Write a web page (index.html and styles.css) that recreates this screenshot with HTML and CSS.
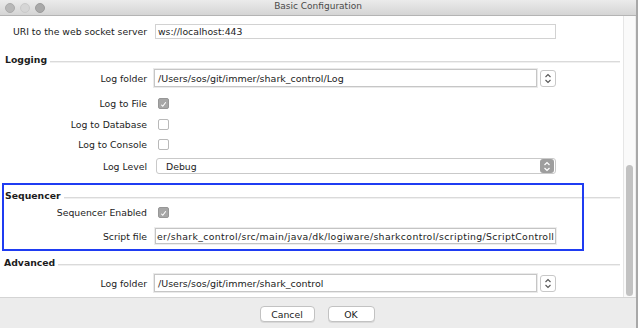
FILE: index.html
```html
<!DOCTYPE html>
<html>
<head>
<meta charset="utf-8">
<link rel="stylesheet" href="styles.css">
</head>
<body>
<div class="window">
  <div class="titlebar">
    <div class="lights">
      <span class="light l1"></span><span class="light l2"></span><span class="light l3"></span>
    </div>
    <div class="title">Basic Configuration</div>
  </div>
  <div class="main">
    <div class="content">
      <div class="row uri">
        <div class="label">URI to the web socket server</div>
        <div class="field plain">ws://localhost:443</div>
      </div>

      <div class="section-head logging"><span class="head-text">Logging</span><span class="head-line"></span></div>
      <div class="row folder first">
        <div class="label">Log folder</div>
        <div class="field combo">/Users/sos/git/immer/shark_control/Log</div>
        <div class="spin">
          <svg width="8" height="11" viewBox="0 0 8 11"><path d="M1.5 4 L4 1.5 L6.5 4 M1.5 7 L4 9.5 L6.5 7" fill="none" stroke="#555" stroke-width="1.1"/></svg>
        </div>
      </div>
      <div class="row check r-file">
        <div class="label">Log to File</div>
        <div class="box checked"><svg width="11" height="11" viewBox="0 0 11 11"><path d="M2.8 5.8 L4.6 7.7 L8.3 2.8" fill="none" stroke="#fff" stroke-width="1.3"/></svg></div>
      </div>
      <div class="row check r-db">
        <div class="label">Log to Database</div>
        <div class="box"></div>
      </div>
      <div class="row check r-console">
        <div class="label">Log to Console</div>
        <div class="box"></div>
      </div>
      <div class="row level">
        <div class="label">Log Level</div>
        <div class="select">
          <span class="select-text">Debug</span>
          <span class="stepper"><svg width="8" height="11" viewBox="0 0 8 11"><path d="M1.5 4 L4 1.5 L6.5 4 M1.5 7 L4 9.5 L6.5 7" fill="none" stroke="#fff" stroke-width="1.2"/></svg></span>
        </div>
      </div>

      <div class="sequencer">
        <div class="highlight"></div>
        <div class="section-head seq"><span class="head-text">Sequencer</span><span class="head-line"></span></div>
        <div class="row check r-seq">
          <div class="label">Sequencer Enabled</div>
          <div class="box checked"><svg width="11" height="11" viewBox="0 0 11 11"><path d="M2.8 5.8 L4.6 7.7 L8.3 2.8" fill="none" stroke="#fff" stroke-width="1.3"/></svg></div>
        </div>
        <div class="row script">
          <div class="label">Script file</div>
          <div class="field plain wide">er/shark_control/src/main/java/dk/logiware/sharkcontrol/scripting/ScriptControll</div>
        </div>
      </div>

      <div class="section-head adv"><span class="head-text">Advanced</span><span class="head-line"></span></div>
      <div class="row folder adv-folder">
        <div class="label">Log folder</div>
        <div class="field combo">/Users/sos/git/immer/shark_control</div>
        <div class="spin">
          <svg width="8" height="11" viewBox="0 0 8 11"><path d="M1.5 4 L4 1.5 L6.5 4 M1.5 7 L4 9.5 L6.5 7" fill="none" stroke="#555" stroke-width="1.1"/></svg>
        </div>
      </div>
    </div>
    <div class="scrollbar"><div class="thumb"></div></div>
  </div>
  <div class="footer">
    <div class="btn cancel">Cancel</div>
    <div class="btn ok">OK</div>
  </div>
</div>
</body>
</html>
```

FILE: styles.css
```css
html, body {
  margin: 0;
  padding: 0;
}
body {
  width: 638px;
  height: 328px;
  overflow: hidden;
  font-family: "DejaVu Sans", "Liberation Sans", sans-serif;
  font-size: 9.3px;
  color: #1c1c1c;
}
.window {
  width: 638px;
  height: 328px;
  box-sizing: border-box;
  border-right: 2px solid #a8a8a8;
  display: flex;
  flex-direction: column;
  background: #ececec;
}
.titlebar {
  height: 15px;
  border-bottom: 1px solid #b4b4b4;
  background: linear-gradient(#ebebeb, #d5d5d5);
  display: flex;
  align-items: center;
  position: relative;
}
.lights {
  display: flex;
  gap: 5px;
  padding-left: 5px;
}
.light {
  width: 10px;
  height: 10px;
  border-radius: 50%;
  background: #b8b8b8;
  box-sizing: border-box;
  border: 1px solid #ababab;
}
.light.l2 {
  background: #d6d6d6;
  border-color: #cacaca;
}
.light.l3 {
  background: #a9a9a9;
  border-color: #9c9c9c;
}
.title {
  position: absolute;
  left: 0;
  right: 0;
  top: 1px;
  text-align: center;
  font-size: 9px;
  color: #4a4a4a;
}
.main {
  height: 281px;
  display: flex;
  background: #fff;
}
.content {
  flex: 1;
  display: flex;
  flex-direction: column;
}
.scrollbar {
  border-left: 1px solid #e6e6e6;
  border-right: 1px solid #ececec;
  background: #fafafa;
  padding-top: 149px;
  box-sizing: border-box;
  width: 13px;
}
.thumb {
  margin-left: 2px;
  width: 7px;
  height: 131px;
  border-radius: 4px;
  background: #c2c2c2;
}
.row {
  display: flex;
  align-items: center;
  height: 20px;
}
.label {
  width: 147px;
  text-align: right;
  margin-right: 8px;
  white-space: nowrap;
  flex: none;
}
.field {
  box-sizing: border-box;
  background: #fff;
  border: 1px solid #d2d2d2;
  white-space: nowrap;
  overflow: hidden;
  padding-left: 2px;
  display: flex;
  align-items: center;
}
.field.plain {
  width: 401px;
  height: 15px;
}
.field.wide {
  height: 16px;
  border-color: #c4c4c4;
  box-shadow: 0 0 0 1px #ededed;
  letter-spacing: 0.36px;
  padding-left: 1px;
}
.field.combo {
  width: 383px;
  height: 18px;
  border-color: #c6c6c6;
  box-shadow: 0 0 0 1px #eaeaea;
  margin-left: -1px;
  padding-left: 3px;
  font-size: 9.5px;
}
.spin {
  width: 16px;
  height: 17px;
  margin-left: 3px;
  box-sizing: border-box;
  border: 1px solid #c8c8c8;
  border-radius: 3px;
  background: #fff;
  display: flex;
  align-items: center;
  justify-content: center;
}
.box {
  width: 11px;
  height: 11px;
  box-sizing: border-box;
  border: 1px solid #b9b9b9;
  border-radius: 2px;
  background: #fff;
  margin-left: 3px;
  display: flex;
}
.box.checked {
  background: #a6a6a6;
  border-color: #979797;
}
.section-head {
  display: flex;
  align-items: center;
  height: 14px;
  padding-left: 5px;
  padding-right: 3px;
}
.head-text {
  font-weight: bold;
  flex: none;
  margin-right: 3px;
}
.head-line {
  flex: 1;
  height: 0;
  border-top: 1px solid #dadada;
  border-bottom: 1px solid #f0f0f0;
  margin-top: 5px;
}
.uri {
  margin-top: 7px;
  height: 16px;
}
.logging {
  margin-top: 13px;
}
.folder.first {
  margin-top: 2px;
}
.r-file {
  margin-top: 5px;
}
.r-db {
  margin-top: 1px;
}
.level {
  margin-top: 4px;
  height: 16px;
}
.select {
  width: 400px;
  height: 16px;
  margin-left: 1px;
  box-sizing: border-box;
  border: 1px solid #c9c9c9;
  border-radius: 3px;
  background: #fff;
  display: flex;
  align-items: center;
  justify-content: space-between;
}
.select-text {
  padding-left: 9px;
}
.stepper {
  width: 14px;
  height: 14px;
  margin-right: 1px;
  border-radius: 3px;
  background: #9e9e9e;
  display: flex;
  align-items: center;
  justify-content: center;
}
.sequencer {
  position: relative;
  margin-top: 14px;
  display: flex;
  flex-direction: column;
}
.highlight {
  position: absolute;
  left: 2px;
  top: -5px;
  width: 582px;
  height: 68px;
  box-sizing: border-box;
  border: 2px solid #1f3cf2;
  pointer-events: none;
}
.script {
  margin-top: 6px;
  height: 16px;
}
.adv {
  margin-top: 11px;
  padding-left: 4px;
}
.adv-folder {
  margin-top: 4px;
}
.footer {
  flex: 1;
  border-top: 1px solid #d4d4d4;
  background: #ececec;
  display: flex;
  justify-content: center;
  align-items: flex-start;
  padding-top: 8px;
  gap: 13px;
  padding-right: 2px;
}
.btn {
  height: 16px;
  box-sizing: border-box;
  border: 1px solid #c2c2c2;
  border-radius: 4px;
  background: #fff;
  display: flex;
  align-items: center;
  justify-content: center;
  box-shadow: 0 1px 0 #d8d8d8;
}
.cancel {
  width: 55px;
}
.ok {
  width: 47px;
}
```
